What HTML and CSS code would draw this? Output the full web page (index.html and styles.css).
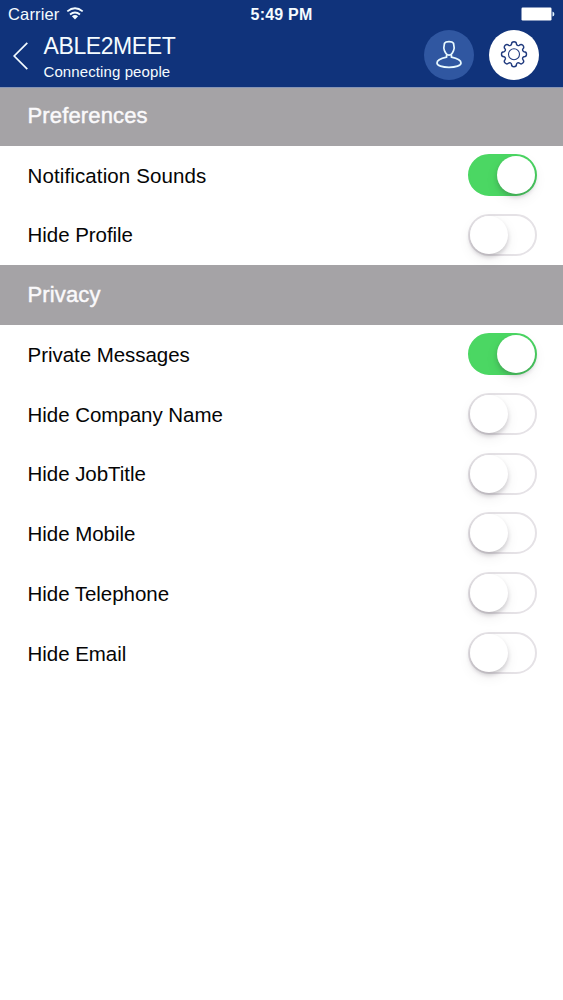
FILE: index.html
```html
<!DOCTYPE html>
<html lang="en">
<head>
<meta charset="utf-8">
<title>ABLE2MEET</title>
<link rel="stylesheet" href="styles.css">
</head>
<body>
<header class="header">
  <div class="status">
    <div class="carrier"><span class="carrier-name">Carrier</span>
      <svg class="wifi" width="18" height="13" viewBox="0 0 18 13"><path d="M1.3 4.4Q9-2 16.7 4.4M4 7.5Q9 3.4 14 7.5" fill="none" stroke="#f2fbff" stroke-width="1.8"/><path d="M5.9 9.3Q9 6.7 12.1 9.3L9 12.4Z" fill="#f2fbff"/></svg>
    </div>
    <div class="time">5:49 PM</div>
    <svg class="battery" width="34" height="14" viewBox="0 0 34 14"><rect x="0.5" y="0.5" width="30" height="13" rx="1.2" fill="#fff"/><path d="M31.5 4.5Q33.4 5 33.4 7T31.5 9.5Z" fill="#dff4ff"/></svg>
  </div>
  <div class="nav">
    <svg class="back" width="16" height="28" viewBox="0 0 16 28"><path d="M14.3 .8L1.2 14L14.3 27.2" fill="none" stroke="#f2fbff" stroke-width="1.7"/></svg>
    <div class="titles"><h1 class="title">ABLE2MEET</h1><p class="subtitle">Connecting people</p></div>
    <div class="actions">
      <button class="round profile" aria-label="Profile"><svg width="50" height="50" viewBox="0 0 50 50"><g fill="none" stroke="#e9faff" stroke-width="1.7" stroke-linejoin="round"><path d="M19.8 18L20.5 13.2Q21.5 11.7 25 11.7T29.5 13.2L30.2 18C29.8 21.5 27.4 25.2 25 25.2S20.2 21.5 19.8 18Z"/><path d="M22.6 24.4V27.2C17 28.4 13 30.4 13 33C13 35.6 18.3 37.3 25 37.3S37 35.6 37 33C37 30.4 33 28.4 27.4 27.2V24.4"/></g></svg></button>
      <button class="round settings" aria-label="Settings"><svg width="50" height="50" viewBox="-25 -24.2 50 50"><g fill="none" stroke="#203a7e" stroke-width="1.4" stroke-linejoin="round"><path d="M10-2.5A2.5 2.5 0 0 1 10 2.5A1.9 1.9 0 0 0 8.84 5.3A2.5 2.5 0 0 1 5.3 8.84A1.9 1.9 0 0 0 2.5 10A2.5 2.5 0 0 1-2.5 10A1.9 1.9 0 0 0-5.3 8.84A2.5 2.5 0 0 1-8.84 5.3A1.9 1.9 0 0 0-10 2.5A2.5 2.5 0 0 1-10-2.5A1.9 1.9 0 0 0-8.84-5.3A2.5 2.5 0 0 1-5.3-8.84A1.9 1.9 0 0 0-2.5-10A2.5 2.5 0 0 1 2.5-10A1.9 1.9 0 0 0 5.3-8.84A2.5 2.5 0 0 1 8.84-5.3A1.9 1.9 0 0 0 10-2.5Z"/><circle r="5.5" stroke-width="1.1"/></g></svg></button>
    </div>
  </div>
</header>
<main>
  <section>
    <h2 class="heading first"><span>Preferences</span></h2>
    <div class="row"><span class="label sounds">Notification Sounds</span><span class="switch on"><span class="knob"></span></span></div>
    <div class="row"><span class="label">Hide Profile</span><span class="switch"><span class="knob"></span></span></div>
  </section>
  <section>
    <h2 class="heading"><span>Privacy</span></h2>
    <div class="row"><span class="label">Private Messages</span><span class="switch on"><span class="knob"></span></span></div>
    <div class="row"><span class="label">Hide Company Name</span><span class="switch"><span class="knob"></span></span></div>
    <div class="row"><span class="label">Hide JobTitle</span><span class="switch"><span class="knob"></span></span></div>
    <div class="row"><span class="label">Hide Mobile</span><span class="switch"><span class="knob"></span></span></div>
    <div class="row"><span class="label">Hide Telephone</span><span class="switch"><span class="knob"></span></span></div>
    <div class="row"><span class="label">Hide Email</span><span class="switch"><span class="knob"></span></span></div>
  </section>
</main>
</body>
</html>
```
FILE: styles.css
```css
* { box-sizing: border-box; }
body { margin: 0; min-height: 1000px; background: #fff; color: #050505; font-family: "Liberation Sans", Arial, sans-serif; }
.header { height: 87px; background: #10337b; color: #f5fcff; }
.status { height: 29px; display: grid; grid-template-columns: 1fr auto 1fr; align-items: center; padding: 0 8px; }
.carrier { display: flex; align-items: center; gap: 7px; font-size: 16.5px; letter-spacing: .15px; }
.wifi { margin-top: -2px; }
.time { font-size: 16px; font-weight: 700; letter-spacing: .2px; }
.battery { justify-self: end; margin-top: -1px; }
.nav { height: 58px; display: flex; align-items: flex-start; padding: 0 24px 0 13px; }
.back { margin-top: 13px; }
.titles { margin-left: 14.5px; padding-top: 2px; }
.title, .subtitle, .heading { margin: 0; }
.title { font-size: 23px; line-height: 30px; font-weight: 400; letter-spacing: -.4px; }
.subtitle { font-size: 15px; line-height: 22px; letter-spacing: .1px; }
.actions { display: flex; gap: 15px; margin-left: auto; padding-top: 1px; }
.round { width: 50px; height: 50px; padding: 0; border: 0; border-radius: 50%; display: flex; }
.profile { background: #3057a1; }
.settings { background: #fff; }
.heading { height: 59.7px; display: flex; align-items: center; padding-left: 27.5px; background: #a5a3a6; color: #faf9fb; font-size: 22px; font-weight: 400; letter-spacing: .15px; -webkit-text-stroke: .45px #faf9fb; }
.first { height: 58.7px; padding-bottom: 1px; border-top: 1px solid #8795b5; }
.row { height: 59.75px; display: flex; align-items: center; justify-content: space-between; padding: 0 26px 0 27.5px; }
.label { font-size: 20.5px; letter-spacing: -.04px; }
.sounds { letter-spacing: .12px; }
.switch { width: 69.5px; height: 42px; border: 2.5px solid #e5e2e6; border-radius: 21px; display: flex; align-items: center; margin-top: -1.5px; }
.knob { width: 38px; height: 38px; border-radius: 50%; background: #fff; box-shadow: 0 3px 4px rgba(40,30,45,.2), 0 5px 14px rgba(40,30,45,.07); }
.on { border-color: #4bd763; background: #4bd763; justify-content: flex-end; }
```
